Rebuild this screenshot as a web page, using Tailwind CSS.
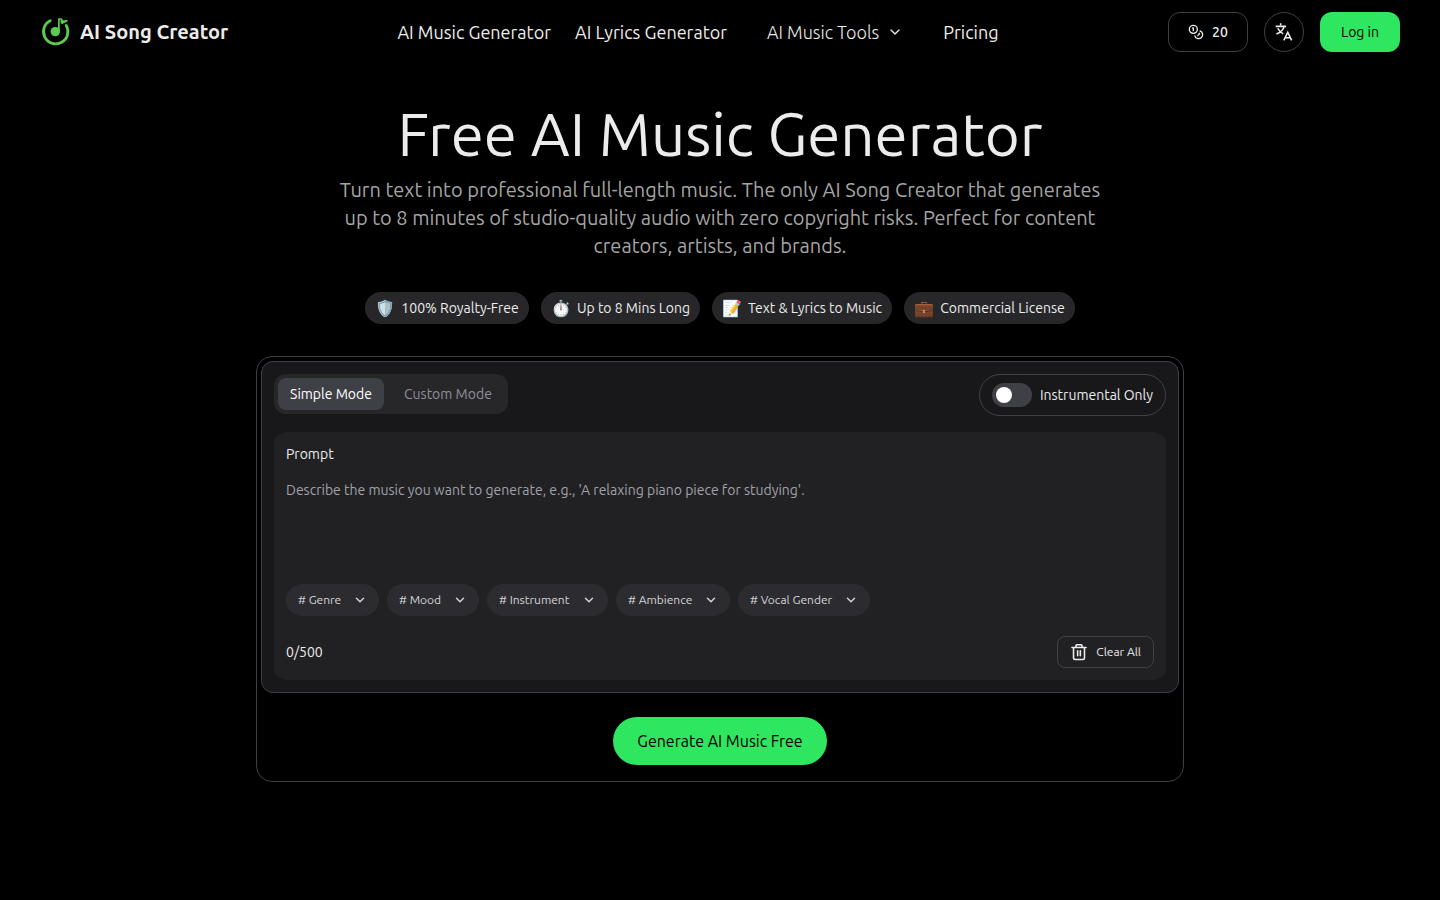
<!DOCTYPE html>
<html lang="en">
<head>
  <meta charset="UTF-8">
  <meta name="viewport" content="width=device-width, initial-scale=1.0">
  <title>Free AI Music Generator</title>
  <script src="https://cdn.jsdelivr.net/npm/@tailwindcss/browser@4"></script>
</head>
<body class="min-h-screen bg-black text-[#ececec] font-[Ubuntu,'Open_Sans','Noto_Sans',sans-serif]">

  <!-- Header -->
  <header class="flex h-16 items-center justify-between px-10">
    <a href="#" class="flex w-47 items-center gap-2 whitespace-nowrap">
      <svg class="size-8 shrink-0" viewBox="0 0 32 32" fill="none">
        <path d="M10.200 4.700a12.200 12.200 0 1 0 16 4.700" stroke="#5ccb4f" stroke-width="2.800" stroke-linecap="round"/>
        <circle cx="15.300" cy="15.600" r="4.700" fill="#5ccb4f"/>
        <path d="M18.900 16V3h2.300l1.400 2.300 4.400-.5-3 1.300-1.900 1.200-.8-1.900" stroke="#5ccb4f" stroke-width="1.700" stroke-linejoin="round" stroke-linecap="round"/>
      </svg>
      <span class="text-xl font-semibold">AI Song Creator</span>
    </a>

    <nav class="flex items-center gap-6 text-lg whitespace-nowrap">
      <a href="#">AI Music Generator</a>
      <a href="#">AI Lyrics Generator</a>
      <button type="button" class="flex items-center gap-2 px-4 font-light">
        AI Music Tools
        <svg class="size-4" viewBox="0 0 24 24" fill="none" stroke="currentColor" stroke-width="2" stroke-linecap="round" stroke-linejoin="round"><path d="m6 9 6 6 6-6"/></svg>
      </button>
      <a href="#">Pricing</a>
    </nav>

    <div class="flex items-center gap-4 text-sm">
      <button type="button" class="flex h-10 w-20 items-center justify-center gap-2 rounded-xl border border-[#3f3f46] font-medium">
        <svg class="size-4" viewBox="0 0 24 24" fill="none" stroke="currentColor" stroke-width="2" stroke-linecap="round" stroke-linejoin="round"><circle cx="8" cy="8" r="6"/><path d="M18.090 10.370A6 6 0 1 1 10.340 18"/><path d="M7 6h1v4"/><path d="m16.710 13.880.700.710-2.820 2.820"/></svg>
        20
      </button>
      <button type="button" aria-label="Language" class="flex size-10 items-center justify-center rounded-full border border-[#3f3f46]">
        <svg class="size-5" viewBox="0 0 24 24" fill="none" stroke="currentColor" stroke-width="1.900"><path d="M2 5.200h12.500M8 1.600v2.200M12.200 5.200c-1 4-4.300 7.300-9.300 9.300M4.500 7.500c1.500 3 3.600 5.200 6.500 6.700M11.800 22l4.700-9.700L21.200 22M13.500 18.800h6"/></svg>
      </button>
      <button type="button" class="h-10 w-20 rounded-xl bg-[#2ee65f] text-black">Log in</button>
    </div>
  </header>

  <main class="mx-auto flex max-w-[928px] flex-col items-center pt-10">
    <h1 class="text-6xl leading-[60px] whitespace-nowrap">Free AI Music Generator</h1>
    <p class="mt-3 max-w-3xl text-center text-xl leading-7 text-[#a5a5a5]">Turn text into professional full-length music. The only AI Song Creator that generates up to 8 minutes of studio-quality audio with zero copyright risks. Perfect for content creators, artists, and brands.</p>

    <ul class="mt-8 flex gap-3 text-sm whitespace-nowrap text-[#ececec]">
      <li class="flex h-8 w-41 items-center justify-center gap-1.5 rounded-full bg-[#27272a]"><span class="text-base">🛡️</span>100% Royalty-Free</li>
      <li class="flex h-8 w-[159px] items-center justify-center gap-1.5 rounded-full bg-[#27272a]"><span class="text-base">⏱️</span>Up to 8 Mins Long</li>
      <li class="flex h-8 w-45 items-center justify-center gap-1.5 rounded-full bg-[#27272a]"><span class="text-base">📝</span>Text &amp; Lyrics to Music</li>
      <li class="flex h-8 w-[171px] items-center justify-center gap-1.5 rounded-full bg-[#27272a]"><span class="text-base">💼</span>Commercial License</li>
    </ul>

    <!-- Generator form -->
    <form class="mt-8 w-full rounded-2xl border border-[#3f3f46] p-1 pb-4">
      <div class="rounded-xl border border-[#3f3f46] bg-[#18181b] p-3">
        <div class="flex items-start justify-between text-sm">
          <div role="tablist" class="flex gap-2 rounded-xl bg-[#27272a] p-1">
            <button type="button" role="tab" aria-selected="true" class="h-8 w-[106px] rounded-lg bg-[#3f3f46] whitespace-nowrap text-white">Simple Mode</button>
            <button type="button" role="tab" aria-selected="false" class="h-8 w-28 rounded-lg whitespace-nowrap text-[#8f8f98]">Custom Mode</button>
          </div>
          <label class="flex h-[42px] items-center gap-2 rounded-full border border-[#3f3f46] px-3 whitespace-nowrap">
            <input type="checkbox" role="switch" class="h-6 w-10 appearance-none rounded-full bg-[#3f3f46] p-1 before:block before:size-4 before:rounded-full before:bg-white checked:bg-[#2ee65f] checked:before:ml-4">
            Instrumental Only
          </label>
        </div>

        <div class="mt-4 rounded-xl bg-[#212123] p-3 text-sm">
          <label for="prompt" class="block">Prompt</label>
          <textarea id="prompt" maxlength="500" class="mt-4 block h-20 w-full resize-none leading-5 outline-none placeholder:text-[#a1a1aa]" placeholder="Describe the music you want to generate, e.g., 'A relaxing piano piece for studying'."></textarea>

          <div class="mt-6 flex gap-2 text-xs text-[#d4d4d8]">
            <div class="grid h-8 w-[93px] items-center rounded-full bg-[#2c2c30]">
              <select aria-label="Genre" class="col-start-1 row-start-1 h-8 appearance-none pl-3 outline-none"><option># Genre</option></select>
              <svg class="pointer-events-none col-start-1 row-start-1 mr-3 size-3.5 justify-self-end" viewBox="0 0 24 24" fill="none" stroke="currentColor" stroke-width="2.500" stroke-linecap="round" stroke-linejoin="round"><path d="m6 9 6 6 6-6"/></svg>
            </div>
            <div class="grid h-8 w-[92px] items-center rounded-full bg-[#2c2c30]">
              <select aria-label="Mood" class="col-start-1 row-start-1 h-8 appearance-none pl-3 outline-none"><option># Mood</option></select>
              <svg class="pointer-events-none col-start-1 row-start-1 mr-3 size-3.5 justify-self-end" viewBox="0 0 24 24" fill="none" stroke="currentColor" stroke-width="2.500" stroke-linecap="round" stroke-linejoin="round"><path d="m6 9 6 6 6-6"/></svg>
            </div>
            <div class="grid h-8 w-[121px] items-center rounded-full bg-[#2c2c30]">
              <select aria-label="Instrument" class="col-start-1 row-start-1 h-8 appearance-none pl-3 outline-none"><option># Instrument</option></select>
              <svg class="pointer-events-none col-start-1 row-start-1 mr-3 size-3.5 justify-self-end" viewBox="0 0 24 24" fill="none" stroke="currentColor" stroke-width="2.500" stroke-linecap="round" stroke-linejoin="round"><path d="m6 9 6 6 6-6"/></svg>
            </div>
            <div class="grid h-8 w-[114px] items-center rounded-full bg-[#2c2c30]">
              <select aria-label="Ambience" class="col-start-1 row-start-1 h-8 appearance-none pl-3 outline-none"><option># Ambience</option></select>
              <svg class="pointer-events-none col-start-1 row-start-1 mr-3 size-3.5 justify-self-end" viewBox="0 0 24 24" fill="none" stroke="currentColor" stroke-width="2.500" stroke-linecap="round" stroke-linejoin="round"><path d="m6 9 6 6 6-6"/></svg>
            </div>
            <div class="grid h-8 w-33 items-center rounded-full bg-[#2c2c30]">
              <select aria-label="Vocal Gender" class="col-start-1 row-start-1 h-8 appearance-none pl-3 outline-none"><option># Vocal Gender</option></select>
              <svg class="pointer-events-none col-start-1 row-start-1 mr-3 size-3.5 justify-self-end" viewBox="0 0 24 24" fill="none" stroke="currentColor" stroke-width="2.500" stroke-linecap="round" stroke-linejoin="round"><path d="m6 9 6 6 6-6"/></svg>
            </div>
          </div>

          <div class="mt-5 flex items-center justify-between">
            <span id="counter">0/500</span>
            <button type="reset" class="flex h-8 items-center gap-2 rounded-lg border border-[#3f3f46] px-3 text-xs whitespace-nowrap">
              <svg class="size-[18px]" viewBox="0 0 24 24" fill="none" stroke="currentColor" stroke-width="2.100" stroke-linecap="round" stroke-linejoin="round"><path d="M2.600 6h18.800M7.500 6l1-3.600h7l1 3.600M4.700 6v13.700a2.300 2.300 0 0 0 2.300 2.300h10a2.300 2.300 0 0 0 2.300-2.300V6M10.200 10.500v6.500M13.800 10.500v6.500"/></svg>
              Clear All
            </button>
          </div>
        </div>
      </div>
      <button type="submit" class="mx-auto mt-6 block h-12 w-[214px] rounded-full bg-[#2ee65f] text-base whitespace-nowrap text-black">Generate AI Music Free</button>
    </form>
  </main>

  <script>
    const prompt = document.getElementById('prompt');
    const counter = document.getElementById('counter');

    // Keep the counter in step with the prompt
    prompt.addEventListener('input', function() {
      counter.textContent = prompt.value.length + '/500';
    });

    document.querySelector('form').addEventListener('reset', function() {
      counter.textContent = '0/500';
    });

    document.querySelector('form').addEventListener('submit', function(e) {
      e.preventDefault();
    });
  </script>
</body>
</html>
